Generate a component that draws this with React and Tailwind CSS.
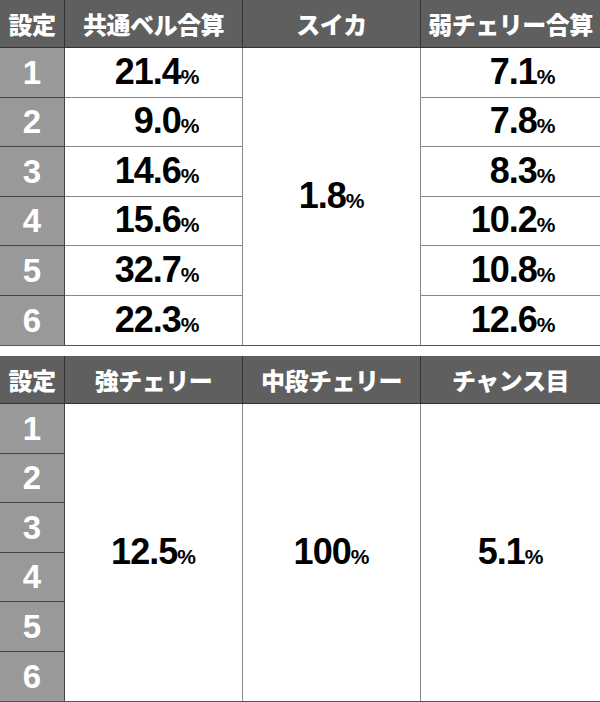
import React from "react";

function Val({ v, w }) {
  return (
    <span className={`inline-block text-right font-bold text-black font-['Liberation_Sans',Arial,sans-serif] ${w}`}>
      <span className="text-[36px] tracking-[-1px] leading-none">{v}</span>
      <span className="text-[21px] leading-none">%</span>
    </span>
  );
}

function Head({ children, last }) {
  return (
    <div
      className={`flex items-center justify-center bg-[#5f5f5f] text-white font-black text-[24px] leading-none tracking-[-0.5px] border-b border-[#333] font-['Noto_Sans_CJK_JP','Noto_Sans',sans-serif] ${last ? "" : "border-r"}`}
    >
      {children}
    </div>
  );
}

function SetCell({ n, last }) {
  return (
    <div
      className={`flex items-center justify-center bg-[#999] text-white font-bold text-[33px] leading-none border-r border-[#444] font-['Liberation_Sans',Arial,sans-serif] ${last ? "" : "border-b"}`}
    >
      {n}
    </div>
  );
}

function Cell({ children, last, right, className = "" }) {
  return (
    <div
      className={`flex items-center justify-center bg-white border-[#888] ${last ? "" : "border-b"} ${right ? "" : "border-r"} ${className}`}
    >
      {children}
    </div>
  );
}

export default function App() {
  const bell = ["21.4", "9.0", "14.6", "15.6", "32.7", "22.3"];
  const weak = ["7.1", "7.8", "8.3", "10.2", "10.8", "12.6"];
  return (
    <div className="w-[600px] h-[702px] bg-white flex flex-col gap-[10px]">
      <div className="grid grid-cols-[65px_178px_178px_179px] grid-rows-[48px_repeat(6,1fr)] h-[346px] border-b border-[#555]">
        <Head>設定</Head>
        <Head>共通ベル合算</Head>
        <Head>スイカ</Head>
        <Head last>弱チェリー合算</Head>
        <Cell last className="col-start-3 row-start-2 row-span-6">
          <Val v="1.8" w="w-auto" />
        </Cell>
        {bell.map((b, i) => (
          <React.Fragment key={i}>
            <SetCell n={i + 1} last={i === 5} />
            <Cell last={i === 5}>
              <Val v={b} w="w-[92px]" />
            </Cell>
            <Cell last={i === 5} right>
              <Val v={weak[i]} w="w-[90px]" />
            </Cell>
          </React.Fragment>
        ))}
      </div>

      <div className="grid grid-cols-[65px_178px_178px_179px] grid-rows-[48px_repeat(6,1fr)] h-[346px] border-b border-[#555]">
        <Head>設定</Head>
        <Head>強チェリー</Head>
        <Head>中段チェリー</Head>
        <Head last>チャンス目</Head>
        <Cell last className="col-start-2 row-start-2 row-span-6">
          <Val v="12.5" w="w-auto" />
        </Cell>
        <Cell last className="col-start-3 row-start-2 row-span-6">
          <Val v="100" w="w-auto" />
        </Cell>
        <Cell last right className="col-start-4 row-start-2 row-span-6">
          <Val v="5.1" w="w-auto" />
        </Cell>
        {[1, 2, 3, 4, 5, 6].map((n, i) => (
          <SetCell key={n} n={n} last={i === 5} />
        ))}
      </div>
    </div>
  );
}
